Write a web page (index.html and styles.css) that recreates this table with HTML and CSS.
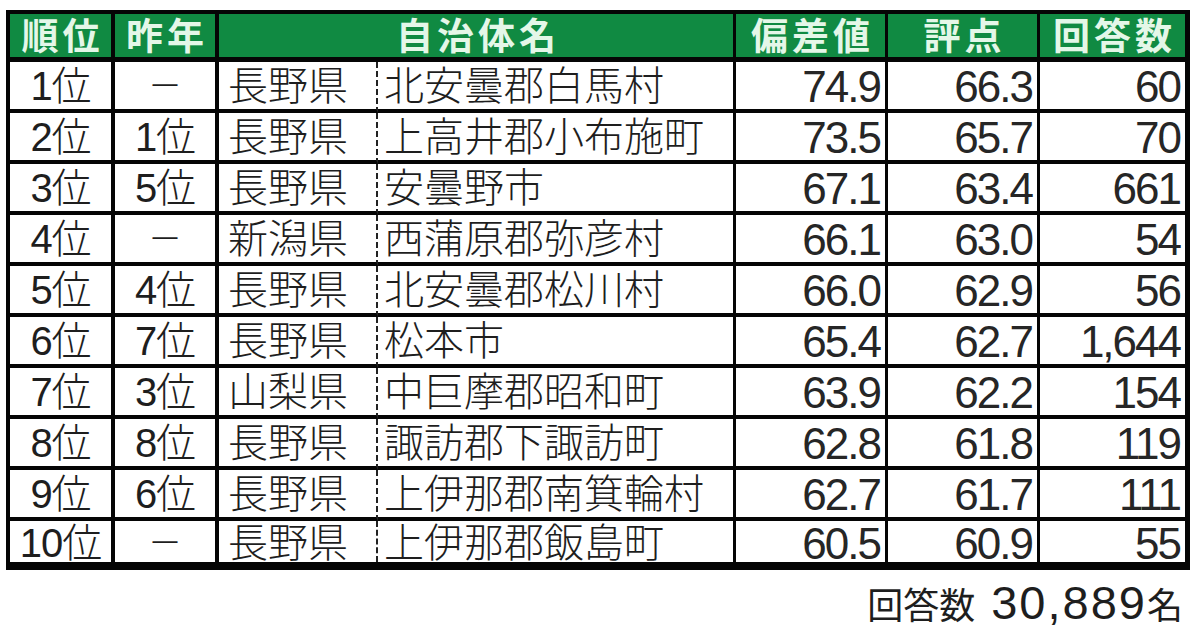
FILE: index.html
```html
<!DOCTYPE html>
<html lang="ja">
<head>
<meta charset="utf-8">
<title>住みここち（自治体）ランキング</title>
<link rel="stylesheet" href="styles.css">
</head>
<body>
<div class="page">
  <table class="rank">
    <colgroup>
      <col class="w1"><col class="w2"><col class="w3"><col class="w4"><col class="w5"><col class="w6"><col class="w7">
    </colgroup>
    <thead>
      <tr>
        <th><div class="h">順位</div></th>
        <th><div class="h">昨年</div></th>
        <th colspan="2"><div class="h">自治体名</div></th>
        <th><div class="h">偏差値</div></th>
        <th><div class="h">評点</div></th>
        <th class="last"><div class="h">回答数</div></th>
      </tr>
    </thead>
    <tbody>
      <tr><td><div class="c ctr">1位</div></td><td><div class="c ctr dash">－</div></td><td class="pref"><div class="c">長野県</div></td><td><div class="c nm">北安曇郡白馬村</div></td><td><div class="c num">74.9</div></td><td><div class="c num">66.3</div></td><td class="last"><div class="c num">60</div></td></tr>
      <tr><td><div class="c ctr">2位</div></td><td><div class="c ctr">1位</div></td><td class="pref"><div class="c">長野県</div></td><td><div class="c nm">上高井郡小布施町</div></td><td><div class="c num">73.5</div></td><td><div class="c num">65.7</div></td><td class="last"><div class="c num">70</div></td></tr>
      <tr><td><div class="c ctr">3位</div></td><td><div class="c ctr">5位</div></td><td class="pref"><div class="c">長野県</div></td><td><div class="c nm">安曇野市</div></td><td><div class="c num">67.1</div></td><td><div class="c num">63.4</div></td><td class="last"><div class="c num">661</div></td></tr>
      <tr><td><div class="c ctr">4位</div></td><td><div class="c ctr dash">－</div></td><td class="pref"><div class="c">新潟県</div></td><td><div class="c nm">西蒲原郡弥彦村</div></td><td><div class="c num">66.1</div></td><td><div class="c num">63.0</div></td><td class="last"><div class="c num">54</div></td></tr>
      <tr><td><div class="c ctr">5位</div></td><td><div class="c ctr">4位</div></td><td class="pref"><div class="c">長野県</div></td><td><div class="c nm">北安曇郡松川村</div></td><td><div class="c num">66.0</div></td><td><div class="c num">62.9</div></td><td class="last"><div class="c num">56</div></td></tr>
      <tr><td><div class="c ctr">6位</div></td><td><div class="c ctr">7位</div></td><td class="pref"><div class="c">長野県</div></td><td><div class="c nm">松本市</div></td><td><div class="c num">65.4</div></td><td><div class="c num">62.7</div></td><td class="last"><div class="c num">1,644</div></td></tr>
      <tr><td><div class="c ctr">7位</div></td><td><div class="c ctr">3位</div></td><td class="pref"><div class="c">山梨県</div></td><td><div class="c nm">中巨摩郡昭和町</div></td><td><div class="c num">63.9</div></td><td><div class="c num">62.2</div></td><td class="last"><div class="c num">154</div></td></tr>
      <tr><td><div class="c ctr">8位</div></td><td><div class="c ctr">8位</div></td><td class="pref"><div class="c">長野県</div></td><td><div class="c nm">諏訪郡下諏訪町</div></td><td><div class="c num">62.8</div></td><td><div class="c num">61.8</div></td><td class="last"><div class="c num">119</div></td></tr>
      <tr><td><div class="c ctr">9位</div></td><td><div class="c ctr">6位</div></td><td class="pref"><div class="c">長野県</div></td><td><div class="c nm">上伊那郡南箕輪村</div></td><td><div class="c num">62.7</div></td><td><div class="c num">61.7</div></td><td class="last"><div class="c num">111</div></td></tr>
      <tr class="end"><td><div class="c ctr">10位</div></td><td><div class="c ctr dash">－</div></td><td class="pref"><div class="c">長野県</div></td><td><div class="c nm">上伊那郡飯島町</div></td><td><div class="c num">60.5</div></td><td><div class="c num">60.9</div></td><td class="last"><div class="c num">55</div></td></tr>
    </tbody>
  </table>
  <div class="total">回答数<span class="big">30,889</span>名</div>
</div>
</body>
</html>
```

FILE: styles.css
```css
html, body {
  margin: 0;
  padding: 0;
  background: #ffffff;
}

body {
  font-family: "Liberation Sans", "Noto Sans CJK JP", sans-serif;
  color: #1e1e1e;
}

.page {
  width: 1184px;
  padding: 10px 0 0 6px;
}

.rank {
  width: 1184px;
  table-layout: fixed;
  border-collapse: separate;
  border-spacing: 0;
  border-style: solid;
  border-color: #050505;
  border-width: 4px 5px 8px 4px;
}

.w1 { width: 105px; }
.w2 { width: 104px; }
.w3 { width: 159px; }
.w4 { width: 358px; }
.w5 { width: 152px; }
.w6 { width: 152px; }
.w7 { width: 145px; }

.rank th,
.rank td {
  padding: 0;
  vertical-align: top;
  border-right: 3px solid #050505;
  border-bottom: 4px solid #050505;
}

.rank th:nth-child(1),
.rank th:nth-child(2),
.rank td:nth-child(1),
.rank td:nth-child(2) {
  border-right-width: 4px;
}

.rank td.pref {
  border-right: 2px dashed #222222;
}

.rank th.last,
.rank td.last {
  border-right: none;
}

.rank th {
  background: #108a42;
  border-bottom-width: 5px;
}

.rank tr.end td {
  border-bottom: none;
}

.h {
  height: 43px;
  box-sizing: border-box;
  padding-top: 1px;
  line-height: 45px;
  font-size: 37px;
  font-weight: bold;
  letter-spacing: 4px;
  text-indent: 4px;
  color: #e4f7e8;
  text-align: center;
  white-space: nowrap;
}

.c {
  height: 47px;
  box-sizing: border-box;
  padding-top: 2px;
  padding-left: 9px;
  line-height: 45px;
  font-size: 40px;
  font-weight: 300;
  white-space: nowrap;
}

.c.ctr {
  text-align: center;
  padding-left: 0;
  letter-spacing: -1px;
}

.c.dash {
  font-size: 34px;
  letter-spacing: 0;
}

.c.nm {
  padding-left: 6px;
}

.c.num {
  font-size: 44px;
  padding-top: 0;
  line-height: 49px;
  padding-left: 0;
  padding-right: 5px;
  text-align: right;
  letter-spacing: -2px;
  color: #262626;
}

.rank tr.end .c {
  height: 41px;
  padding-top: 0;
}

.rank tr.end .c.num {
  line-height: 45px;
}

.total {
  padding: 9px 7px 0 0;
  text-align: right;
  font-size: 36px;
  line-height: 48px;
  color: #1e1e1e;
  white-space: nowrap;
}

.total .big {
  font-size: 47px;
  letter-spacing: 2px;
  margin-left: 16px;
}
```
